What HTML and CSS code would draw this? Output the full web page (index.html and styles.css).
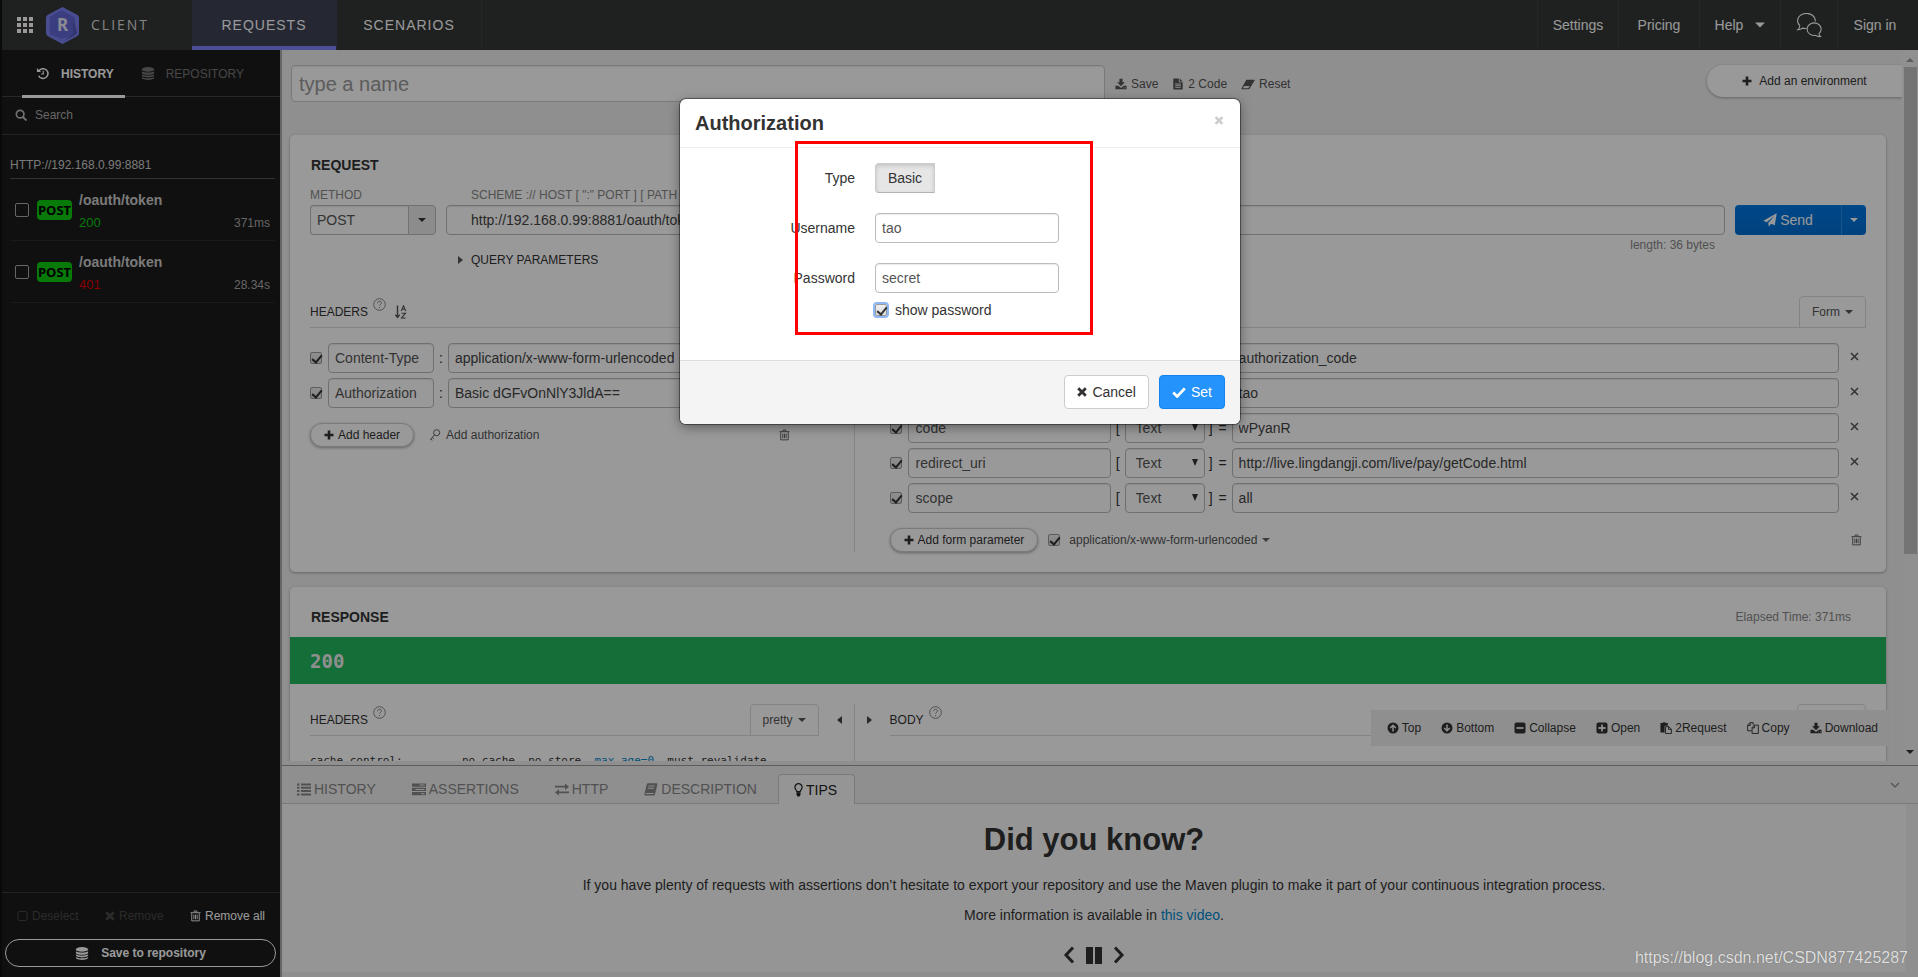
FILE: index.html
```html
<!DOCTYPE html>
<html lang="en">
<head>
<meta charset="utf-8">
<title>Client - Requests</title>
<link rel="stylesheet" href="styles.css">
</head>
<body>
<svg class="sprite" aria-hidden="true">
  <symbol id="i-caret" viewBox="0 0 8 4"><path d="M0 0h8L4 4z"/></symbol>
  <symbol id="i-select" viewBox="0 0 6 7"><path d="M0 0h6L3 7z"/></symbol>
  <symbol id="i-right" viewBox="0 0 5 8"><path d="M0 0v8l5-4z"/></symbol>
  <symbol id="i-left" viewBox="0 0 5 8"><path d="M5 0v8L0 4z"/></symbol>
  <symbol id="i-db" viewBox="0 0 14 14"><ellipse cx="7" cy="2.6" rx="6.6" ry="2.5"/><path d="M.4 4.6c2 1.9 11.200 1.900 13.200 0v1.500c0 1.300-3 2.200-6.600 2.200S.4 7.400.4 6.100zM.4 7.700c2 1.900 11.200 1.900 13.200 0v1.300c0 1.300-3 2.200-6.600 2.200S.4 10.300.4 9zM.4 10.700c2 1.900 11.200 1.900 13.200 0v1c0 1.300-3 2.200-6.600 2.200S.4 13 .4 11.700z"/></symbol>
  <symbol id="i-history" viewBox="0 0 14 14"><path d="M2.600 4.200A5.300 5.300 0 1 1 2.300 9.400" fill="none" stroke="currentColor" stroke-width="1.600"/><path d="M.5 1v4.500H5z"/><path d="M7.300 4v3.600H5" fill="none" stroke="currentColor" stroke-width="1.200"/></symbol>
  <symbol id="i-search" viewBox="0 0 14 14"><circle cx="6" cy="6" r="4.400" fill="none" stroke="currentColor" stroke-width="2"/><path d="M9.300 9.300l3.400 3.400" stroke="currentColor" stroke-width="2.400" stroke-linecap="round"/></symbol>
  <symbol id="i-plus" viewBox="0 0 10 10"><path d="M3.700.5h2.600v3.200h3.200v2.600H6.300v3.200H3.700V6.300H.5V3.700h3.200z"/></symbol>
  <symbol id="i-trash" viewBox="0 0 12 13"><path d="M1.900 3.500v8.300h8.200V3.500M.5 2.900h11M4.200 2.700l.5-1.700h2.600l.5 1.700M4.200 5v5M6 5v5M7.800 5v5" fill="none" stroke="currentColor"/></symbol>
  <symbol id="i-download" viewBox="0 0 14 14"><path d="M5.200 1h3.600v4h2.700L7 9.500 2.500 5h2.700z"/><path d="M.5 9h3.300L7 11.600 10.200 9h3.300v4.200H.5zM9.600 11v1h1v-1zM11.500 11v1h1v-1z" fill-rule="evenodd"/></symbol>
  <symbol id="i-file" viewBox="0 0 12 14"><path d="M.5.5H7V5h4.500v8.500H.5zM2.700 6.500v1h6.600v-1zM2.700 8.600v1h6.600v-1zM2.700 10.700v1h6.600v-1z" fill-rule="evenodd"/><path d="M8 .5L11.500 4H8z"/></symbol>
  <symbol id="i-eraser" viewBox="0 0 15 12"><path d="M6.300.8h7.900q.8 0 .4.8L9.300 10.400q-.4.600-1 .6H.9Q0 11 .5 10.200L5.600 1.300q.3-.5.7-.5zM3.400 7.500L1.900 10h5.900l1.500-2.500z" fill-rule="evenodd"/></symbol>
  <symbol id="i-plane" viewBox="0 0 15 15"><path d="M14.700.3L12.600 13.200 8.600 11.600 6.300 14.700 5.600 10.600 12.500 3 4 9.800.3 8.300z"/></symbol>
  <symbol id="i-help" viewBox="0 0 13 13"><circle cx="6.500" cy="6.500" r="5.800" fill="none" stroke="currentColor"/><path d="M4.600 5.200c0-2.600 3.900-2.500 3.900-.2 0 1.400-1.900 1.300-1.900 2.800M6.600 9v1.200" fill="none" stroke="currentColor"/></symbol>
  <symbol id="i-sort" viewBox="0 0 12 14"><path d="M2.500.5v11M.3 9.800l2.200 2.700 2.200-2.700" fill="none" stroke="currentColor" stroke-width="1.400"/><path d="M6.300 6L8.500.8 10.700 6M7 4.300h3M6.500 8.200h4l-4 4.800h4.200" fill="none" stroke="currentColor" stroke-width="1.100"/></symbol>
  <symbol id="i-key" viewBox="0 0 12 13"><circle cx="7.800" cy="4" r="3.300" fill="none" stroke="currentColor"/><path d="M5.500 6.400L1 11.500M1.500 11l1.600 1.400M3 9.200l1.600 1.400" fill="none" stroke="currentColor"/></symbol>
  <symbol id="i-times" viewBox="0 0 10 10"><path d="M2.200.2L5 3 7.800.2l2 2L7 5l2.800 2.800-2 2L5 7 2.200 9.800l-2-2L3 5 .2 2.200z"/></symbol>
  <symbol id="i-x" viewBox="0 0 9 9"><path d="M1 1l7 7M8 1L1 8" fill="none" stroke="currentColor" stroke-width="1.500"/></symbol>
  <symbol id="i-check" viewBox="0 0 14 11"><path d="M1.200 5.600l4 3.800 7.600-8" fill="none" stroke="currentColor" stroke-width="2.800"/></symbol>
  <symbol id="i-box" viewBox="0 0 11 11"><rect x="1" y="1" width="9" height="9" rx="1.500" fill="none" stroke="currentColor"/></symbol>
  <symbol id="i-up" viewBox="0 0 12 12"><circle cx="6" cy="6" r="5.500"/><path d="M6 9.500V3.500M3.200 6L6 3.200 8.800 6" fill="none" stroke="#eee" stroke-width="1.500"/></symbol>
  <symbol id="i-down" viewBox="0 0 12 12"><circle cx="6" cy="6" r="5.500"/><path d="M6 2.500v6M3.200 6L6 8.800 8.800 6" fill="none" stroke="#eee" stroke-width="1.500"/></symbol>
  <symbol id="i-minus-sq" viewBox="0 0 12 12"><rect x=".5" y=".5" width="11" height="11" rx="2"/><path d="M2.500 6h7" stroke="#eee" stroke-width="1.800"/></symbol>
  <symbol id="i-plus-sq" viewBox="0 0 12 12"><rect x=".5" y=".5" width="11" height="11" rx="2"/><path d="M2.500 6h7M6 2.500v7" stroke="#eee" stroke-width="1.800"/></symbol>
  <symbol id="i-paste" viewBox="0 0 13 13"><path d="M.5 1H3l.5-.8h2L6 1h2.500v3H5v7.500H.5z"/><path d="M6 5h3.500l2.800 2.800v4.700H6zM9.300 5v3h3" fill="none" stroke="currentColor"/></symbol>
  <symbol id="i-copy" viewBox="0 0 13 13"><path d="M5 9.500H.700V3.500L3.200.7h3.500V3M3.500.8v3H.8M5.500 6l2.500-2.600h4.300v9H5.500zM8.200 3.500v2.800H5.500" fill="none" stroke="currentColor"/></symbol>
  <symbol id="i-list" viewBox="0 0 14 12"><path d="M0 0h2.500v2H0zM4 0h10v2H4zM0 3.300h2.500v2H0zM4 3.300h10v2H4zM0 6.600h2.500v2H0zM4 6.600h10v2H4zM0 9.900h2.500v2H0zM4 9.900h10v2H4z"/></symbol>
  <symbol id="i-server" viewBox="0 0 14 12"><path d="M0 0h14v3.200H0zM7.500 1.100v1h5v-1zM0 4.300h14v3.200H0zM3.500 5.400v1h9v-1zM0 8.600h14v3.200H0zM9 9.700v1h3.500v-1z" fill-rule="evenodd"/></symbol>
  <symbol id="i-swap" viewBox="0 0 14 12"><path d="M0 2.300h10V0l4 3.200-4 3.200V4.100H0zM14 8H4V5.700L0 8.900l4 3.100V9.800h10z"/></symbol>
  <symbol id="i-book" viewBox="0 0 14 13"><path d="M4 .3h8.500q1.200 0 .9 1.200L11 11.300q-.3 1.200-1.500 1.200H1.500Q0 12.500.4 11L2.800 1.300Q3 .3 4 .3zM4.700 2.500l-.3 1h6l.3-1zM4.100 4.700l-.3 1h6l.3-1zM1.800 10l-.3 1h8l.3-1z" fill-rule="evenodd"/></symbol>
  <symbol id="i-bulb" viewBox="0 0 9 14"><path d="M2.800 8.700C2.800 7 .9 6.500.9 4.300a3.600 3.600 0 0 1 7.200 0C8.100 6.500 6.200 7 6.200 8.700z" fill="none" stroke="currentColor" stroke-width="1.200"/><path d="M2.500 9.300h4v2.500L5.500 13.500h-2l-1-1.700z"/></symbol>
  <symbol id="i-chev-down" viewBox="0 0 10 6"><path d="M1 1l4 4 4-4" fill="none" stroke="currentColor" stroke-width="1.200"/></symbol>
  <symbol id="i-chev-left" viewBox="0 0 12 18"><path d="M10 1.500L3 9l7 7.500" fill="none" stroke="currentColor" stroke-width="3"/></symbol>
  <symbol id="i-chev-right" viewBox="0 0 12 18"><path d="M2 1.500L9 9l-7 7.500" fill="none" stroke="currentColor" stroke-width="3"/></symbol>
  <symbol id="i-pause" viewBox="0 0 16 17"><path d="M0 0h7v17H0zM9 0h7v17H9z"/></symbol>
  <symbol id="i-chat" viewBox="0 0 26 25"><path d="M3.800 12.500A8.800 7.300 0 1 1 19.200 8.500M3.800 12.500q0 3-2 4.200 3.200 0 4.700-1.600 2 .6 3.800.4M23 20.700A7 6.300 0 1 0 19.800 22.300q1.800 1.600 4.700 1.200-1.400-1-1.500-2.800z" fill="none" stroke="currentColor" stroke-width="1.100"/></symbol>
  <symbol id="i-grid" viewBox="0 0 16 16"><path d="M0 0h4v4H0zM6 0h4v4H6zM12 0h4v4h-4zM0 6h4v4H0zM6 6h4v4H6zM12 6h4v4h-4zM0 12h4v4H0zM6 12h4v4H6zM12 12h4v4h-4z"/></symbol>
</svg>

<header class="topbar">
  <div class="brand">
    <button class="icon-btn" type="button" aria-label="Apps"><svg class="grid"><use href="#i-grid"/></svg></button>
    <span class="logo">
      <svg class="hex" viewBox="0 0 36 40" aria-hidden="true"><path d="M18 1l15 8q2 1 2 3v16q0 2-2 3L18 39 3 31q-2-1-2-3V12q0-2 2-3z" fill="#7a80f0"/><path d="M17 4l14 8-2 18-12 4L5 29V11z" fill="#6268d6"/><path d="M29 12v16l-9 8 9-5 4-3z" fill="#5358b8"/></svg>
      <b class="logo-letter">R</b>
    </span>
    <span class="brand-name">CLIENT</span>
  </div>
  <nav class="modes">
    <a class="mode active" href="#">REQUESTS</a>
    <a class="mode" href="#">SCENARIOS</a>
  </nav>
  <nav class="account">
    <a href="#">Settings</a>
    <a href="#">Pricing</a>
    <a href="#">Help <svg class="caret big"><use href="#i-caret"/></svg></a>
    <a href="#" class="chat" aria-label="Chat"><svg><use href="#i-chat"/></svg></a>
    <a href="#" class="sign">Sign in</a>
  </nav>
</header>

<div class="shell">
  <aside class="sidebar">
    <nav class="side-tabs">
      <a class="side-tab active" href="#"><svg class="ic14"><use href="#i-history"/></svg>HISTORY</a>
      <a class="side-tab" href="#"><svg class="ic14"><use href="#i-db"/></svg>REPOSITORY</a>
    </nav>
    <label class="search"><svg class="ic12"><use href="#i-search"/></svg><input type="text" placeholder="Search" aria-label="Search"></label>
    <section class="log">
      <h2 class="log-host">HTTP://192.168.0.99:8881</h2>
      <article class="log-item">
        <input class="pick" type="checkbox" aria-label="Select request 200">
        <span class="verb">POST</span>
        <div class="log-body"><b>/oauth/token</b><div class="log-meta"><span class="ok">200</span><span>371ms</span></div></div>
      </article>
      <article class="log-item">
        <input class="pick" type="checkbox" aria-label="Select request 401">
        <span class="verb">POST</span>
        <div class="log-body"><b>/oauth/token</b><div class="log-meta"><span class="bad">401</span><span>28.34s</span></div></div>
      </article>
    </section>
    <footer class="side-foot">
      <div class="side-actions">
        <button type="button" class="text-btn off"><svg class="ic11"><use href="#i-box"/></svg>Deselect</button>
        <button type="button" class="text-btn off"><svg class="ic10"><use href="#i-times"/></svg>Remove</button>
        <button type="button" class="text-btn on"><svg class="ic11"><use href="#i-trash"/></svg>Remove all</button>
      </div>
      <button type="button" class="save-repo"><svg class="ic14"><use href="#i-db"/></svg>Save to repository</button>
    </footer>
  </aside>

  <main class="main">
    <div class="pane">
      <div class="content">
        <div class="name-row">
          <input class="name-input" type="text" placeholder="type a name" aria-label="Request name">
          <div class="name-actions">
            <button type="button" class="text-btn"><svg class="ic12"><use href="#i-download"/></svg>Save</button>
            <button type="button" class="text-btn"><svg class="ic12"><use href="#i-file"/></svg>2 Code</button>
            <button type="button" class="text-btn"><svg class="ic14"><use href="#i-eraser"/></svg>Reset</button>
          </div>
          <button type="button" class="env"><svg class="ic10"><use href="#i-plus"/></svg>Add an environment</button>
        </div>

        <section class="card">
          <h2 class="card-title">REQUEST</h2>
          <div class="url-grid">
            <label class="hint" for="method">METHOD</label>
            <label class="hint url-hint" for="url">SCHEME :// HOST [ ":" PORT ] [ PATH [ "?" QUERY ]]</label>
            <span></span>
            <div class="method-box"><select id="method" class="field"><option>POST</option></select><span class="drop"><svg class="caret"><use href="#i-caret"/></svg></span></div>
            <input id="url" class="field url" type="text" value="http://192.168.0.99:8881/oauth/token">
            <div class="send"><button type="button" class="send-main"><svg class="plane"><use href="#i-plane"/></svg>Send</button><button type="button" class="send-more" aria-label="More"><svg class="caret"><use href="#i-caret"/></svg></button></div>
            <span></span>
            <div class="under-url"><button type="button" class="query"><svg class="tri"><use href="#i-right"/></svg>QUERY PARAMETERS</button><span class="length">length: 36 bytes</span></div>
          </div>

          <div class="cols">
            <div class="col left">
              <div class="col-head"><h3>HEADERS</h3><svg class="help"><use href="#i-help"/></svg><svg class="sort"><use href="#i-sort"/></svg></div>
              <div class="rows">
                <div class="row"><input type="checkbox" class="tick" checked aria-label="Use Content-Type"><input class="field key" type="text" value="Content-Type" aria-label="Header name"><span class="sep">:</span><input class="field val" type="text" value="application/x-www-form-urlencoded" aria-label="Header value"><button type="button" class="x" aria-label="Delete"><svg><use href="#i-x"/></svg></button></div>
                <div class="row"><input type="checkbox" class="tick" checked aria-label="Use Authorization"><input class="field key" type="text" value="Authorization" aria-label="Header name"><span class="sep">:</span><input class="field val" type="text" value="Basic dGFvOnNlY3JldA==" aria-label="Header value"><button type="button" class="x" aria-label="Delete"><svg><use href="#i-x"/></svg></button></div>
              </div>
              <div class="row-foot">
                <button type="button" class="pill"><svg class="ic10"><use href="#i-plus"/></svg>Add header</button>
                <button type="button" class="text-btn auth"><svg class="ic12"><use href="#i-key"/></svg>Add authorization</button>
                <button type="button" class="bin" aria-label="Delete all headers"><svg class="ic11"><use href="#i-trash"/></svg></button>
              </div>
            </div>
            <div class="col right">
              <div class="col-head"><h3>BODY</h3><svg class="help"><use href="#i-help"/></svg><button type="button" class="tab-btn">Form <svg class="caret"><use href="#i-caret"/></svg></button></div>
              <div class="rows">
                <div class="row"><input type="checkbox" class="tick" checked aria-label="Use parameter 1"><input class="field pkey" type="text" value="grant_type" aria-label="Name"><span class="sep">[</span><span class="type"><select class="field" aria-label="Type"><option>Text</option></select><svg><use href="#i-select"/></svg></span><span class="sep close-br">]</span><span class="sep eq">=</span><input class="field val" type="text" value="authorization_code" aria-label="Value"><button type="button" class="x" aria-label="Delete"><svg><use href="#i-x"/></svg></button></div>
                <div class="row"><input type="checkbox" class="tick" checked aria-label="Use parameter 2"><input class="field pkey" type="text" value="client_id" aria-label="Name"><span class="sep">[</span><span class="type"><select class="field" aria-label="Type"><option>Text</option></select><svg><use href="#i-select"/></svg></span><span class="sep close-br">]</span><span class="sep eq">=</span><input class="field val" type="text" value="tao" aria-label="Value"><button type="button" class="x" aria-label="Delete"><svg><use href="#i-x"/></svg></button></div>
                <div class="row"><input type="checkbox" class="tick" checked aria-label="Use code"><input class="field pkey" type="text" value="code" aria-label="Name"><span class="sep">[</span><span class="type"><select class="field" aria-label="Type"><option>Text</option></select><svg><use href="#i-select"/></svg></span><span class="sep close-br">]</span><span class="sep eq">=</span><input class="field val" type="text" value="wPyanR" aria-label="Value"><button type="button" class="x" aria-label="Delete"><svg><use href="#i-x"/></svg></button></div>
                <div class="row"><input type="checkbox" class="tick" checked aria-label="Use redirect_uri"><input class="field pkey" type="text" value="redirect_uri" aria-label="Name"><span class="sep">[</span><span class="type"><select class="field" aria-label="Type"><option>Text</option></select><svg><use href="#i-select"/></svg></span><span class="sep close-br">]</span><span class="sep eq">=</span><input class="field val" type="text" value="http://live.lingdangji.com/live/pay/getCode.html" aria-label="Value"><button type="button" class="x" aria-label="Delete"><svg><use href="#i-x"/></svg></button></div>
                <div class="row"><input type="checkbox" class="tick" checked aria-label="Use scope"><input class="field pkey" type="text" value="scope" aria-label="Name"><span class="sep">[</span><span class="type"><select class="field" aria-label="Type"><option>Text</option></select><svg><use href="#i-select"/></svg></span><span class="sep close-br">]</span><span class="sep eq">=</span><input class="field val" type="text" value="all" aria-label="Value"><button type="button" class="x" aria-label="Delete"><svg><use href="#i-x"/></svg></button></div>
              </div>
              <div class="row-foot">
                <button type="button" class="pill"><svg class="ic10"><use href="#i-plus"/></svg>Add form parameter</button>
                <label class="enc"><input type="checkbox" class="tick" checked><span>application/x-www-form-urlencoded</span></label><svg class="caret"><use href="#i-caret"/></svg>
                <button type="button" class="bin" aria-label="Delete all parameters"><svg class="ic11"><use href="#i-trash"/></svg></button>
              </div>
            </div>
          </div>
        </section>

        <section class="card response">
          <div class="resp-head"><h2 class="card-title">RESPONSE</h2><span class="elapsed">Elapsed Time: 371ms</span></div>
          <div class="status">200</div>
          <div class="cols resp-cols">
            <div class="col left">
              <div class="col-head"><h3>HEADERS</h3><svg class="help"><use href="#i-help"/></svg><button type="button" class="tab-btn">pretty <svg class="caret"><use href="#i-caret"/></svg></button></div>
              <dl class="resp-list"><dt>cache-control:</dt><dd>no-cache, no-store, <a href="#">max-age=0</a>, must-revalidate</dd></dl>
              <button type="button" class="fold fold-left" aria-label="Collapse left"><svg class="tri"><use href="#i-left"/></svg></button>
            </div>
            <div class="col right">
              <button type="button" class="fold fold-right" aria-label="Collapse right"><svg class="tri"><use href="#i-right"/></svg></button>
              <div class="col-head"><h3>BODY</h3><svg class="help"><use href="#i-help"/></svg><button type="button" class="tab-btn format" aria-label="Body format"><svg class="caret"><use href="#i-caret"/></svg></button></div>
            </div>
          </div>
        </section>
      </div>
      <div class="scroll"><svg class="arrow faint"><path d="M4 0l4 4H0z"/></svg><span class="thumb"></span><svg class="arrow"><path d="M0 0h8L4 4z"/></svg></div>
      <div class="quick">
        <button type="button" class="text-btn"><svg class="ic12"><use href="#i-up"/></svg>Top</button>
        <button type="button" class="text-btn"><svg class="ic12"><use href="#i-down"/></svg>Bottom</button>
        <button type="button" class="text-btn"><svg class="ic12"><use href="#i-minus-sq"/></svg>Collapse</button>
        <button type="button" class="text-btn"><svg class="ic12"><use href="#i-plus-sq"/></svg>Open</button>
        <button type="button" class="text-btn"><svg class="ic12"><use href="#i-paste"/></svg>2Request</button>
        <button type="button" class="text-btn"><svg class="ic12"><use href="#i-copy"/></svg>Copy</button>
        <button type="button" class="text-btn"><svg class="ic12"><use href="#i-download"/></svg>Download</button>
      </div>
    </div>

    <section class="dock">
      <nav class="dock-tabs">
        <a href="#"><svg class="ic14"><use href="#i-list"/></svg>HISTORY</a>
        <a href="#"><svg class="ic14"><use href="#i-server"/></svg>ASSERTIONS</a>
        <a href="#"><svg class="ic14"><use href="#i-swap"/></svg>HTTP</a>
        <a href="#"><svg class="ic14"><use href="#i-book"/></svg>DESCRIPTION</a>
        <a href="#" class="active"><svg class="bulb"><use href="#i-bulb"/></svg>TIPS</a>
        <button type="button" class="dock-fold" aria-label="Collapse panel"><svg><use href="#i-chev-down"/></svg></button>
      </nav>
      <div class="tips">
        <h2>Did you know?</h2>
        <p>If you have plenty of requests with assertions don’t hesitate to export your repository and use the Maven plugin to make it part of your continuous integration process.</p>
        <p>More information is available in <a href="#">this video</a>.</p>
        <div class="player">
          <button type="button" aria-label="Previous"><svg class="chev"><use href="#i-chev-left"/></svg></button>
          <button type="button" aria-label="Pause"><svg class="pause"><use href="#i-pause"/></svg></button>
          <button type="button" aria-label="Next"><svg class="chev"><use href="#i-chev-right"/></svg></button>
        </div>
      </div>
    </section>
  </main>
</div>

<div class="backdrop">
  <form class="modal" role="dialog" aria-labelledby="dlg-title">
    <div class="modal-head"><h2 id="dlg-title">Authorization</h2><button type="button" class="close" aria-label="Close"><svg><use href="#i-times"/></svg></button></div>
    <div class="modal-body">
      <span class="lbl">Type</span><button type="button" class="basic">Basic</button>
      <label class="lbl" for="user">Username</label><input id="user" class="field" type="text" value="tao">
      <label class="lbl" for="pass">Password</label><input id="pass" class="field" type="text" value="secret">
      <label class="show"><input type="checkbox" class="tick focus" checked>show password</label>
    </div>
    <div class="modal-foot">
      <button type="button" class="btn"><svg class="ic10"><use href="#i-times"/></svg>Cancel</button>
      <button type="submit" class="btn primary"><svg class="check"><use href="#i-check"/></svg>Set</button>
    </div>
    <span class="mark"></span>
  </form>
</div>
<div class="watermark">https://blog.csdn.net/CSDN877425287</div>
</body>
</html>
```
FILE: styles.css
```css
* { box-sizing: border-box; }
body {
  margin: 0;
  height: 100vh;
  display: flex;
  flex-direction: column;
  overflow: hidden;
  position: relative;
  background: #eee;
  color: #333;
  font: 14px/20px "Liberation Sans", Arial, sans-serif;
}
h2, h3, p, dl, dd { margin: 0; }
a { color: inherit; text-decoration: none; }
button, input, select { font: inherit; color: inherit; margin: 0; }
button { padding: 0; border: 0; background: none; }
svg { fill: currentColor; flex: none; }
.sprite { position: absolute; width: 0; height: 0; }
.ic10 { width: 10px; height: 10px; }
.ic11 { width: 11px; height: 12px; }
.ic12 { width: 12px; height: 12px; }
.ic14 { width: 14px; height: 13px; }
.caret { width: 8px; height: 4px; }
.caret.big { width: 10px; height: 6px; }
.tri { width: 5px; height: 8px; }

/* top bar */
.topbar {
  flex: none;
  height: 50px;
  display: flex;
  align-items: stretch;
  border-left: 2px solid #111;
  background: #343736;
  color: #fff;
}
.brand { width: 190px; display: flex; align-items: center; padding-left: 15px; }
.icon-btn, .grid { width: 16px; height: 16px; }
.icon-btn { display: flex; }
.logo { display: grid; place-items: center; margin-left: 12px; }
.logo > * { grid-area: 1 / 1; }
.hex { width: 35px; height: 39px; }
.logo-letter { font: bold 17px/20px "Noto Sans", sans-serif; color: #e6e6f5; }
.brand-name { margin-left: 11px; font: 14px/20px "Open Sans", sans-serif; letter-spacing: 2px; color: #ddd; }
.modes { display: flex; }
.mode {
  width: 145px;
  display: flex;
  align-items: center;
  justify-content: center;
  letter-spacing: 1px;
  border-right: 1px solid #3f4241;
}
.mode.active { background: #3e4155; box-shadow: inset 0 -4px #8084fa; border-right-color: #3e4155; }
.account { margin-left: auto; display: flex; }
.account a {
  min-width: 81px;
  padding: 0 14px;
  display: flex;
  align-items: center;
  justify-content: center;
  gap: 12px;
  border-left: 1px solid #404342;
}
.account .chat { min-width: 57px; }
.account .sign { padding-right: 20px; }
.chat svg { width: 26px; height: 25px; }

.shell { flex: 1; min-height: 0; display: flex; }

/* sidebar */
.sidebar {
  flex: none;
  width: 282px;
  display: flex;
  flex-direction: column;
  background: #1b1b1b;
  border-left: 2px solid #111;
  border-right: 2px solid #aaa;
  font-size: 12px;
  color: #aaa;
}
.side-tabs { height: 47px; display: flex; padding-left: 20px; gap: 2px; border-bottom: 1px solid #444; }
.side-tab { height: 48px; display: flex; align-items: center; gap: 11px; padding: 0 11px 1px 14px; color: #777; }
.side-tab.active { font-weight: bold; color: #fff; border-bottom: 3px solid #fff; padding-top: 2px; padding-bottom: 0; }
.search { height: 38px; display: flex; align-items: center; gap: 8px; padding: 0 0 2px 13px; border-bottom: 1px solid #343b40; color: #bbb; }
.search input { flex: 1; min-width: 0; border: 0; padding: 0; background: none; }
.search input::placeholder { color: #aaa; opacity: 1; }
.log { flex: 1; padding: 20px 5px 0 8px; }
.log-host { font-size: 12px; line-height: 20px; padding-bottom: 3px; font-weight: normal; color: #ccc; border-bottom: 1px solid #555; }
.log-item { display: flex; align-items: center; gap: 8px; height: 62px; padding: 0 5px; border-bottom: 1px solid #2c2c2c; }
.pick { appearance: none; width: 14px; height: 14px; border: 1px solid #aaa; border-radius: 2px; }
.verb { width: 35px; height: 20px; border-radius: 4px; background: #0dcc10; color: #000; font: bold 13px/20px "Open Sans", sans-serif; text-align: center; }
.log-body { flex: 1; line-height: 22px; margin-left: -1px; padding-top: 3px; }
.log-body b { font-size: 14px; color: #ccc; }
.log-meta { display: flex; justify-content: space-between; }
.ok, .bad { font-size: 13px; }
.ok { color: #0dcc10; }
.bad { color: #d00; }
.side-foot { border-top: 1px solid #343b40; padding: 13px 4px 10px 3px; }
.side-actions { display: flex; justify-content: space-between; padding: 0 11px 0 12px; }
.side-actions .off { color: #494949; }
.side-actions .on { color: #fff; }
.save-repo {
  width: 100%;
  height: 28px;
  margin-top: 13px;
  display: flex;
  align-items: center;
  justify-content: center;
  gap: 12px;
  border: 1px solid #fff;
  border-radius: 14px;
  color: #fff;
  font-weight: bold;
}

.text-btn { display: inline-flex; align-items: center; gap: 4px; font-size: 12px; line-height: 20px; white-space: nowrap; }

/* request pane */
.main { flex: 1; min-width: 0; display: flex; flex-direction: column; }
.pane { flex: 1; min-height: 0; position: relative; display: flex; overflow: hidden; }
.content { flex: 1; min-width: 0; overflow: hidden; }
.name-row { display: flex; align-items: flex-start; padding: 15px 0 0 9px; }
.name-input {
  flex: 0 1 814px;
  min-width: 0;
  height: 37px;
  padding: 2px 7px 0;
  font-size: 20px;
  border: 1px solid #ccc;
  border-radius: 4px;
  background: #fff;
  box-shadow: inset 0 1px 1px rgba(0, 0, 0, .08);
}
.name-input::placeholder { color: #999; opacity: 1; }
.name-actions { display: flex; gap: 14px; padding: 9px 10px; color: #555; }
.env {
  margin-left: auto;
  width: 195px;
  height: 32px;
  display: flex;
  align-items: center;
  justify-content: center;
  gap: 7px;
  border-radius: 16px 0 0 16px;
  background: #fff;
  box-shadow: 0 1px 3px rgba(0, 0, 0, .3);
  font-size: 12px;
}
.card { margin: 32px 16px 0 8px; padding: 20px; border-radius: 5px; background: #fff; box-shadow: 0 1px 3px rgba(0, 0, 0, .3); }
.card-title { font-size: 14px; line-height: 20px; padding-left: 1px; color: #333; }
.url-grid { display: grid; grid-template-columns: 126px 1fr 131px; column-gap: 10px; margin-top: 10px; }
.hint { font-size: 12px; line-height: 20px; color: #888; }
.url-hint { padding-left: 25px; }
.field {
  height: 30px;
  min-width: 0;
  padding: 4px 6px;
  border: 1px solid #bbb;
  border-radius: 4px;
  background: #fff;
  color: #555;
  font-size: 14px;
  line-height: 20px;
  box-shadow: inset 0 1px 1px rgba(0, 0, 0, .08);
  outline: 0;
}
select.field { appearance: none; width: 100%; }
.method-box { display: flex; }
.method-box select.field { border-radius: 4px 0 0 4px; border-right: 0; }
.drop { flex: none; width: 28px; display: grid; place-items: center; border: 1px solid #bbb; border-radius: 0 4px 4px 0; background: #e9e9e9; }
.url { padding-left: 24px; color: #444; }
.send { display: flex; color: #fff; }
.send button { background: linear-gradient(#0078e4, #006fd2); display: flex; align-items: center; justify-content: center; gap: 3px; }
.send .send-main { flex: 1; border-radius: 4px 0 0 4px; }
.send .send-more { width: 25px; border-radius: 0 4px 4px 0; border-left: 1px solid #2b8de8; }
.plane { width: 14px; height: 14px; }
.under-url { display: flex; align-items: flex-start; justify-content: space-between; font-size: 12px; padding-right: 10px; }
.query { display: flex; align-items: center; gap: 8px; padding: 15px 0 0 12px; line-height: 20px; }
.query .tri { color: #555; }
.length { color: #888; }

.cols { display: grid; grid-template-columns: 35fr 65fr; margin-top: 26px; }
.col { position: relative; min-width: 0; }
.left { padding-right: 35px; border-right: 1px solid #ddd; }
.right { padding-left: 35px; }
.col-head { display: flex; align-items: center; height: 32px; border-bottom: 1px solid #ddd; }
.col-head h3 { font-size: 12px; font-weight: normal; line-height: 20px; }
.help { width: 13px; height: 13px; margin: 0 9px 14px 5px; color: #888; }
.sort { width: 12px; height: 14px; color: #555; }
.tab-btn {
  align-self: stretch;
  margin: 0 0 -1px auto;
  padding: 0 12px;
  display: flex;
  align-items: center;
  gap: 5px;
  border: 1px solid #ddd;
  border-radius: 4px 4px 0 0;
  font-size: 12px;
  color: #555;
}
.tab-btn.format { width: 69px; justify-content: flex-end; }
.rows { display: grid; gap: 5px; padding: 15px 0; }
.row { display: flex; align-items: center; }
.tick {
  appearance: none;
  position: relative;
  flex: none;
  width: 12px;
  height: 12px;
  border: 1px solid #999;
  border-radius: 2px;
  background: linear-gradient(#eee, #ddd);
}
.tick::after {
  content: "";
  position: absolute;
  left: 3px;
  top: 0;
  width: 4px;
  height: 8px;
  border: solid #333;
  border-width: 0 2px 2px 0;
  transform: rotate(40deg);
}
.tick.focus { box-shadow: 0 0 0 2px #8db8f5; }
.key { width: 106px; margin-left: 6px; }
.pkey { width: 203px; margin-left: 6px; padding-left: 7px; }
.sep { width: 14px; text-align: center; }
.close-br { width: 12px; }
.eq { width: 15px; text-align: left; padding-left: 2px; }
.val { flex: 1; color: #444; }
.type { position: relative; width: 80px; display: flex; }
.type .field { padding-left: 10px; }
.type svg { position: absolute; right: 7px; top: 11px; width: 6px; height: 7px; }
.x { width: 27px; height: 30px; padding: 0 0 3px 4px; display: grid; place-items: center; color: #555; }
.x svg { width: 9px; height: 9px; }
.row-foot { display: flex; align-items: center; }
.pill {
  height: 24px;
  padding: 0 13px;
  display: flex;
  align-items: center;
  gap: 4px;
  border-radius: 12px;
  border: 1px solid #ccc;
  background: #fff;
  box-shadow: 0 1px 3px rgba(0, 0, 0, .35);
  font-size: 12px;
}
.auth { margin-left: 15px; gap: 5px; color: #555; }
.bin { margin-left: auto; display: flex; color: #555; }
.left .bin { margin-right: 29px; }
.right .bin { margin-right: 4px; }
.enc { display: flex; align-items: center; gap: 9px; margin: 0 5px 0 10px; font-size: 12px; color: #555; }
.row-foot .caret { color: #666; }

/* response */
.response { margin-top: 15px; padding: 20px 0 0; }
.resp-head { display: flex; justify-content: space-between; padding: 0 35px 10px 20px; }
.elapsed { font-size: 12px; color: #888; }
.status { height: 47px; padding: 0 20px; background: #21b75c; color: #eee; font: bold 19px/48px "DejaVu Sans Mono", monospace; }
.resp-cols { margin: 20px 20px 0; }
.resp-list { display: grid; grid-template-columns: 152px 1fr; padding-top: 15px; font: 11px/20px "DejaVu Sans Mono", monospace; height: 90px; white-space: nowrap; }
.resp-list a { color: #08c; }
.fold { position: absolute; top: 12px; display: flex; color: #444; }
.fold-left { right: 12px; }
.fold-right { left: 12px; }

.scroll { flex: none; width: 16px; display: flex; flex-direction: column; align-items: center; padding: 8px 0 7px; background: #f1f1f1; }
.arrow { width: 8px; height: 4px; }
.arrow.faint { color: #999; }
.thumb { width: 13px; height: 70%; margin: 5px 0 auto; background: #c1c1c1; }
.quick { position: absolute; right: 30px; bottom: 15px; height: 36px; padding: 0 10px 0 16px; display: flex; align-items: center; gap: 20px; background: #eee; }
.quick .text-btn { gap: 3px; }

/* bottom dock */
.dock { flex: none; border-top: 4px solid #eee; background: #eee; padding-bottom: 5px; }
.dock-tabs { display: flex; align-items: flex-end; height: 39px; border-top: 1px solid #999; border-bottom: 1px solid #ccc; color: #888; }
.dock-tabs a { display: flex; align-items: center; gap: 3px; height: 29px; padding: 0 17px 0 14px; border: 1px solid transparent; border-width: 1px 1px 0; margin-right: 3px; }
.dock-tabs .active { color: #222; background: #f9f9f9; border-color: #ccc; border-radius: 4px 4px 0 0; margin-bottom: -1px; height: 30px; padding-left: 15px; }
.bulb { width: 9px; height: 14px; }
.dock-fold { margin: 0 18px 15px auto; display: flex; }
.dock-fold svg { width: 10px; height: 6px; }
.tips { margin-right: 12px; padding: 16px 0 7px; background: #f9f9f9; text-align: center; }
.tips h2 { font-size: 31px; line-height: 40px; margin-bottom: 15px; }
.tips p { margin-bottom: 10px; }
.tips a { color: #08c; }
.player { display: flex; align-items: center; justify-content: center; gap: 11px; height: 20px; margin-top: 20px; }
.player button { display: flex; }
.chev { width: 12px; height: 18px; }
.pause { width: 16px; height: 17px; }

/* dialog */
.backdrop { position: absolute; inset: 0; background: rgba(0, 0, 0, .4); padding: 99px 0 0 2px; }
.modal { position: relative; width: 560px; margin: 0 auto; border-radius: 6px; background: #fff; box-shadow: 0 0 0 1px rgba(0, 0, 0, .4), 0 3px 12px rgba(0, 0, 0, .4); }
.modal-head { display: flex; align-items: center; justify-content: space-between; height: 49px; padding: 0 16px 0 15px; border-bottom: 1px solid #eee; }
.modal-head h2 { font-size: 20px; line-height: 30px; }
.close { color: #ccc; display: flex; padding-bottom: 6px; }
.close svg { width: 10px; height: 9px; }
.modal-body { display: grid; grid-template-columns: 175px 184px; column-gap: 20px; row-gap: 20px; align-items: center; padding: 15px 0 40px; justify-items: start; }
.lbl { justify-self: end; }
.modal-body .field { width: 184px; }
.basic { height: 30px; width: 60px; border: 1px solid #ccc; border-bottom-color: #b3b3b3; border-radius: 4px 0 0 4px; background: #e6e6e6; box-shadow: inset 0 2px 4px rgba(0, 0, 0, .15); }
.show { grid-column: 2; display: flex; align-items: center; gap: 8px; margin-top: -13px; }
.modal-foot { display: flex; justify-content: flex-end; gap: 10px; padding: 14px 15px 15px; border-top: 1px solid #ddd; border-radius: 0 0 6px 6px; background: #f4f4f4; }
.btn { height: 34px; padding: 0 12px; display: flex; align-items: center; gap: 5px; border: 1px solid #ccc; border-radius: 4px; background: #fff; }
.btn.primary { background: #2493fb; border-color: #1583ee; color: #fff; gap: 5px; }
.check { width: 14px; height: 11px; }
.mark { position: absolute; left: 115px; top: 42px; width: 298px; height: 194px; border: 3px solid #f00; }
.watermark { position: absolute; right: 10px; bottom: 8px; font-size: 16px; line-height: 22px; color: #dedede; text-shadow: 0 0 1px #666; }
```
